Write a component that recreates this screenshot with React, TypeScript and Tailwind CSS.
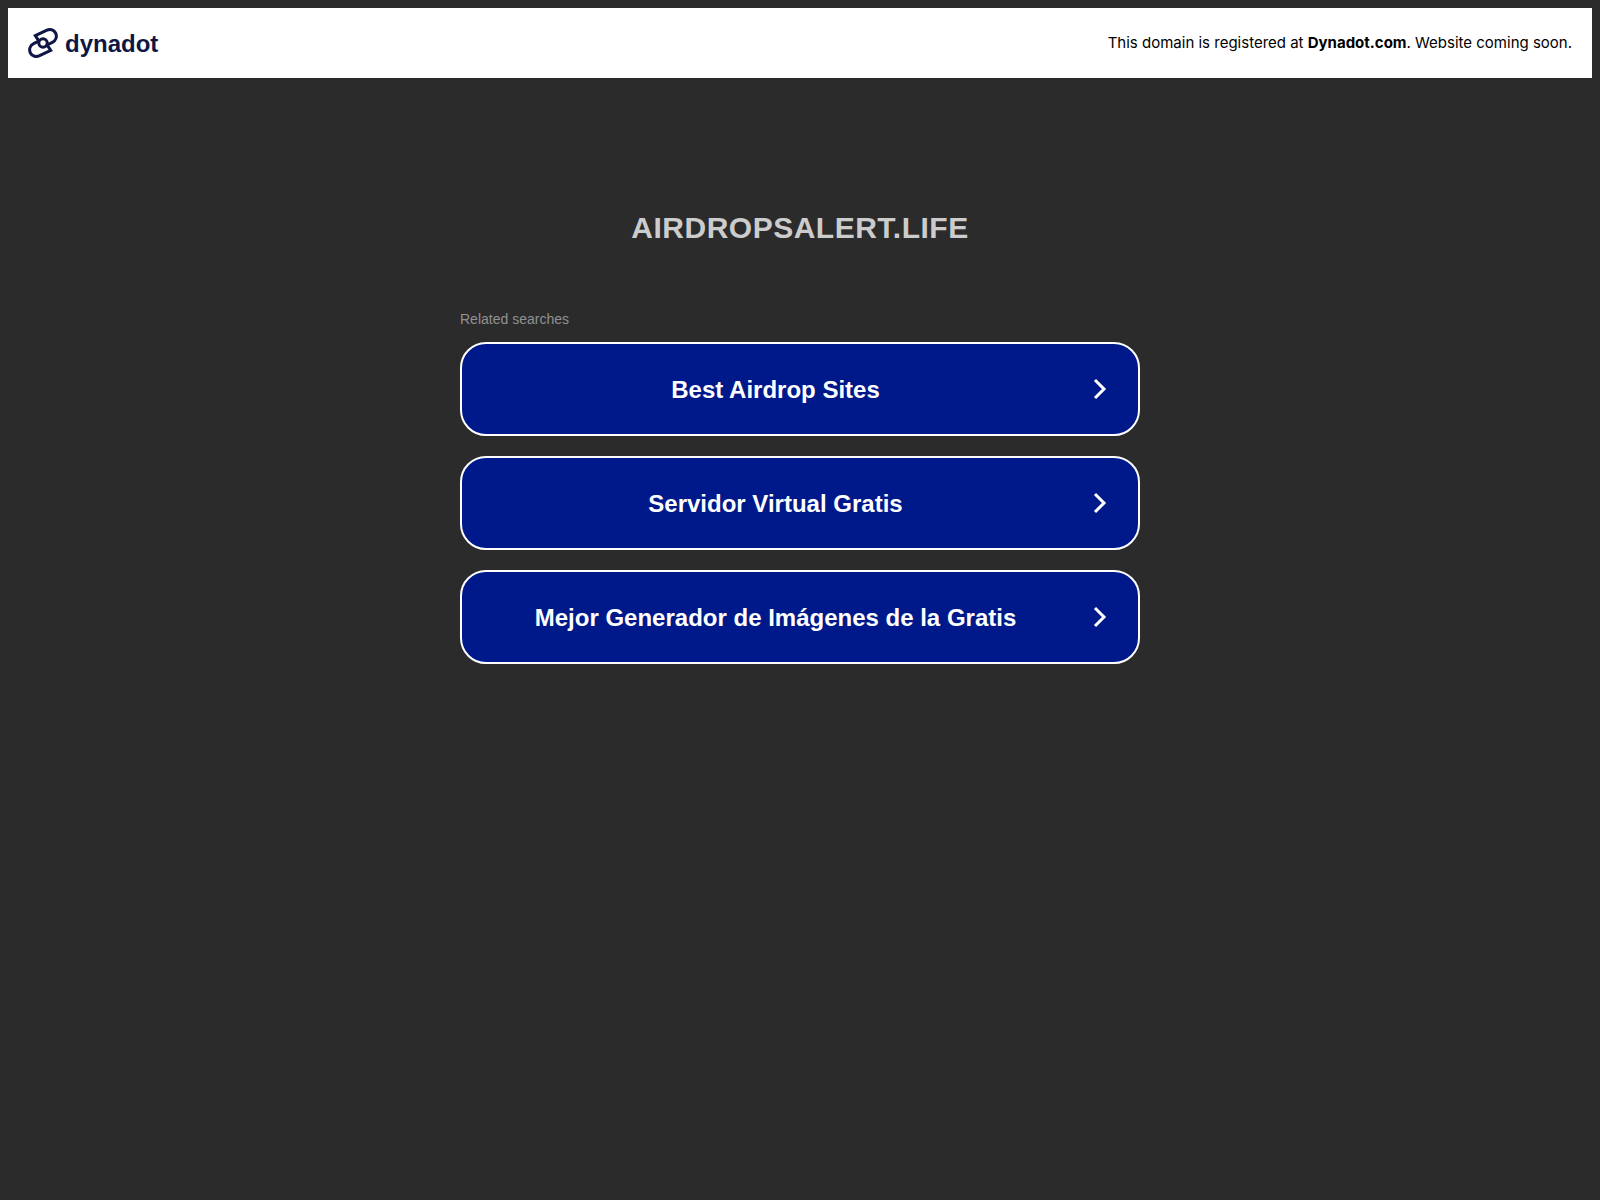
import React from "react";

const SEARCHES = [
  "Best Airdrop Sites",
  "Servidor Virtual Gratis",
  "Mejor Generador de Imágenes de la Gratis",
];

function DynadotLogo() {
  return (
    <a href="#" aria-label="dynadot" className="flex items-center gap-[7px] text-[#0f1645]">
      <svg width="30" height="30" viewBox="0 0 30 30" fill="none" stroke="currentColor" strokeWidth="3">
        <path d="M11.4 13.8 7.3 7.6 18.4 2.3C21.8 .8 25.9 1.5 27.6 5C29.3 8.6 28 12.6 24.4 14.3L18.6 17.2" />
        <path d="M18.6 16.2 22.7 22.4 11.6 27.7C8.2 29.2 4.1 28.5 2.4 25C.7 21.4 2 17.4 5.6 15.7L11.4 12.8" />
        <circle cx="15" cy="15" r="4.2" />
      </svg>
      <span className="pt-0.5 text-2xl leading-[30px] font-bold">dynadot</span>
    </a>
  );
}

function SearchLink({ label }: { label: string }) {
  return (
    <a
      href="#"
      className="flex items-center rounded-[26px] border-2 border-white bg-[#00198a] py-7 pr-[31px] text-white"
    >
      <span className="flex-1 pt-0.5 pr-5 pl-4 text-center text-2xl leading-8 font-bold">{label}</span>
      <svg width="14" height="22" viewBox="0 0 14 22" fill="none" stroke="currentColor" strokeWidth="3" aria-hidden="true">
        <path d="M2 2 11 11 2 20" />
      </svg>
    </a>
  );
}

export default function App() {
  return (
    <div className="min-h-screen bg-[#2b2b2b] p-2 font-['Liberation_Sans',Arial,sans-serif]">
      <header className="flex items-center justify-between bg-white px-5 py-[19px]">
        <DynadotLogo />
        <p className="font-['Inter',sans-serif] text-[15px] text-black">
          This domain is registered at{" "}
          <a href="#" className="font-bold">Dynadot.com</a>. Website coming soon.
        </p>
      </header>

      <main className="mx-auto mt-[130px] max-w-[680px]">
        <h1 className="text-center text-[30px] leading-10 font-bold tracking-[0.5px] text-[#cccccc]">
          AIRDROPSALERT.LIFE
        </h1>

        <p className="mt-[61px] text-sm leading-5 text-[#919191]">Related searches</p>
        <nav className="mt-[13px] flex flex-col gap-5">
          {SEARCHES.map((label) => (
            <SearchLink key={label} label={label} />
          ))}
        </nav>
      </main>
    </div>
  );
}
